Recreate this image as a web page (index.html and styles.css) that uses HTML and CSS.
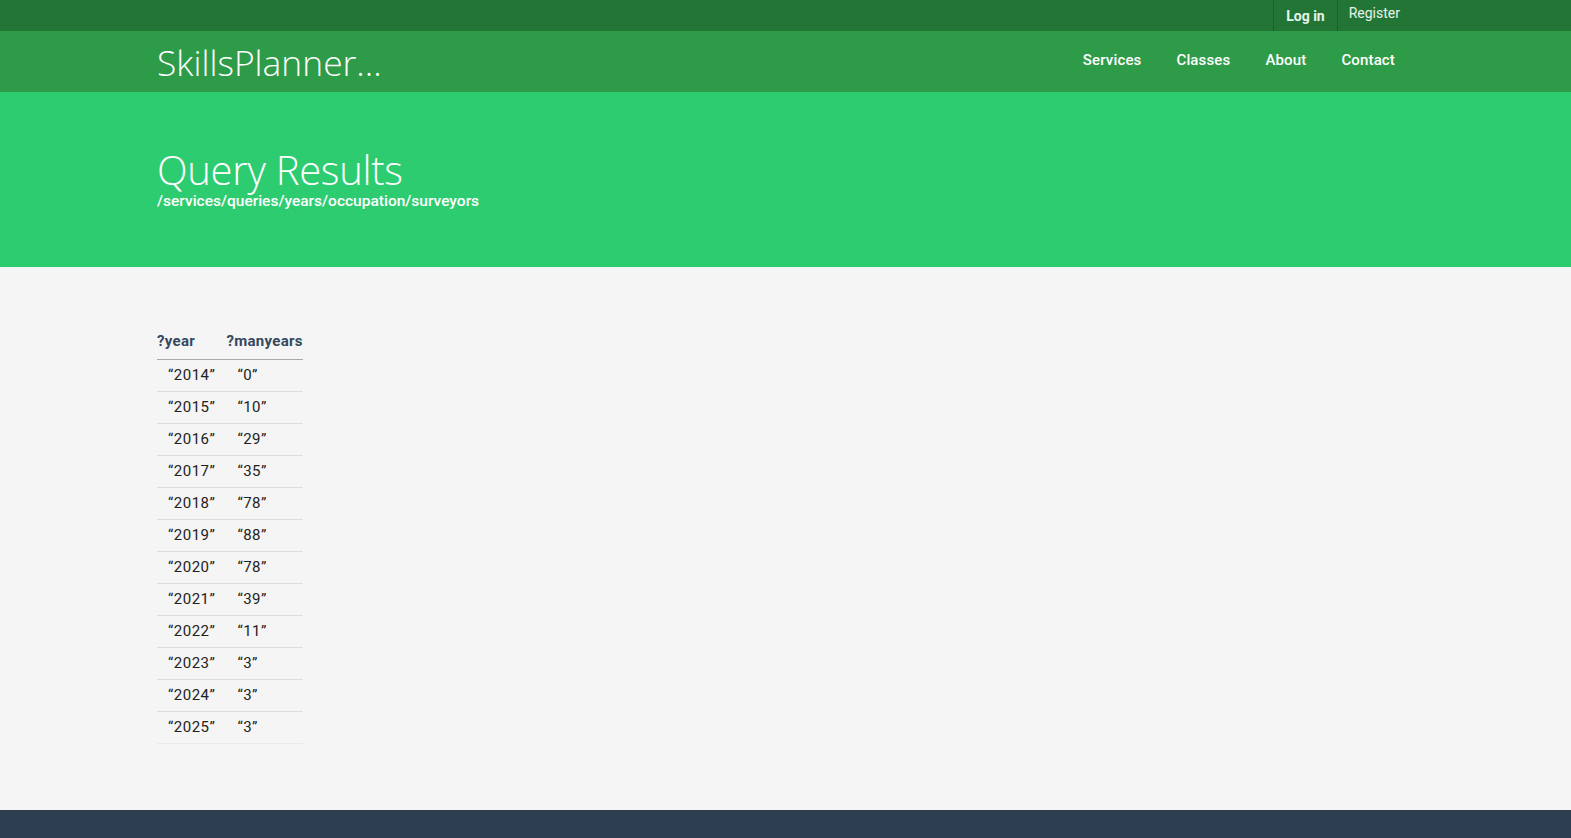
FILE: index.html
```html
<!DOCTYPE html>
<html>
<head>
<meta charset="utf-8">
<link rel="stylesheet" href="styles.css">
</head>
<body>
<div class="topbar">
  <div class="container topbar-inner">
    <a class="top-link login">Log in</a>
    <a class="top-link register">Register</a>
  </div>
</div>
<header class="header">
  <div class="container header-inner">
    <div class="logo">SkillsPlanner...</div>
    <nav class="nav">
      <a>Services</a>
      <a>Classes</a>
      <a>About</a>
      <a>Contact</a>
    </nav>
  </div>
</header>
<section class="hero">
  <div class="container">
    <h1 class="title">Query Results</h1>
    <div class="subtitle">/services/queries/years/occupation/surveyors</div>
  </div>
</section>
<main class="content">
  <div class="container">
    <table class="results">
      <thead>
        <tr><th>?year</th><th>?manyears</th></tr>
      </thead>
      <tbody>
        <tr><td>“2014”</td><td>“0”</td></tr>
        <tr><td>“2015”</td><td>“10”</td></tr>
        <tr><td>“2016”</td><td>“29”</td></tr>
        <tr><td>“2017”</td><td>“35”</td></tr>
        <tr><td>“2018”</td><td>“78”</td></tr>
        <tr><td>“2019”</td><td>“88”</td></tr>
        <tr><td>“2020”</td><td>“78”</td></tr>
        <tr><td>“2021”</td><td>“39”</td></tr>
        <tr><td>“2022”</td><td>“11”</td></tr>
        <tr><td>“2023”</td><td>“3”</td></tr>
        <tr><td>“2024”</td><td>“3”</td></tr>
        <tr><td>“2025”</td><td>“3”</td></tr>
      </tbody>
    </table>
  </div>
</main>
<footer class="footer"></footer>
</body>
</html>
```
FILE: styles.css
```css
* { box-sizing: border-box; }
html, body { margin: 0; padding: 0; }
body {
  background: #f5f5f5;
  font-family: Roboto, "Liberation Sans", sans-serif;
  color: #222;
}
a { text-decoration: none; color: inherit; cursor: pointer; }
.container {
  width: 1257px;
  margin: 0 auto;
}
.topbar {
  background: #237535;
  height: 31px;
}
.topbar-inner {
  display: flex;
  justify-content: flex-end;
  height: 31px;
  padding-right: 14px;
}
.top-link {
  display: flex;
  align-items: center;
  height: 31px;
  font-size: 14px;
  color: #e6f5e9;
}
.login {
  font-weight: 700;
  padding: 0 12px 0 12px;
  border-left: 1px solid #1b5f2a;
  border-right: 1px solid #1b5f2a;
}
.register {
  padding: 0 0 6px 11px;
}
.header {
  background: #2e9b48;
  height: 61px;
}
.header-inner {
  display: flex;
  align-items: center;
  justify-content: space-between;
  height: 61px;
}
.logo {
  font-family: "Open Sans", sans-serif;
  font-weight: 300;
  font-size: 35.4px;
  color: #fff;
  margin-top: 1px;
}
.nav {
  display: flex;
  gap: 35px;
  padding-right: 19px;
  padding-bottom: 3px;
}
.nav a {
  color: #fff;
  font-size: 15px;
  font-weight: 500;
  letter-spacing: 0.15px;
}
.hero {
  background: #2ecc71;
  height: 175px;
  padding-top: 54px;
}
.title {
  margin: 0;
  font-family: "Open Sans", sans-serif;
  font-weight: 300;
  font-size: 40px;
  line-height: 48px;
  color: #fff;
  letter-spacing: -0.3px;
}
.subtitle {
  font-size: 15.5px;
  line-height: 14px;
  font-weight: 500;
  color: #fff;
}
.content {
  height: 543px;
  padding-top: 61px;
}
.results {
  border-collapse: collapse;
}
.results th {
  text-align: left;
  font-size: 15px;
  font-weight: 700;
  letter-spacing: 0.3px;
  color: #34495e;
  padding: 0 0 9px 0;
  height: 31px;
  border-bottom: 1px solid #a8a8a8;
  vertical-align: bottom;
}
.results td {
  font-size: 15px;
  letter-spacing: 0.5px;
  color: #222;
  height: 32px;
  padding: 0 11px 0 11px;
  border-bottom: 1px solid #dcdcdc;
  vertical-align: middle;
}
.results tr:last-child td { border-bottom-color: #eaeaea; }
.footer {
  background: #2c3e50;
  height: 30px;
}
```
